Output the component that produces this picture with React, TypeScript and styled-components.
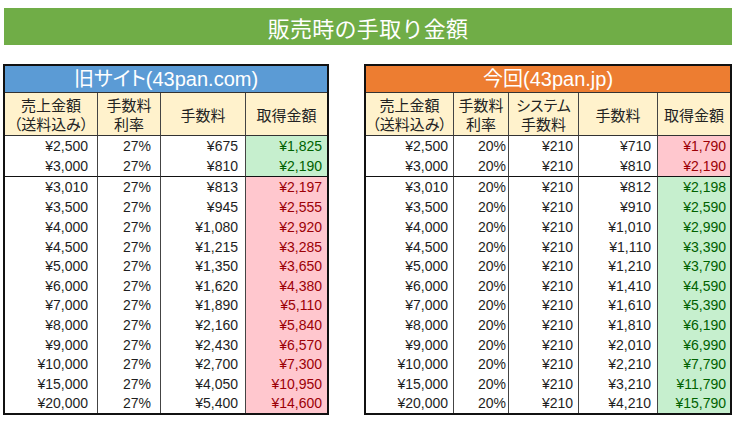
import React from 'react';
import styled, { createGlobalStyle } from 'styled-components';

const Global = createGlobalStyle`
  html, body { margin: 0; padding: 0; background: #fff; }
  body { font-family: "Liberation Sans", "Noto Sans CJK JP", sans-serif; }
`;

const Page = styled.div`
  width: 740px;
  height: 421px;
  box-sizing: border-box;
  padding: 8px 0 0 3px;
  display: flex;
  flex-direction: column;
  gap: 19px;
`;

const TitleBar = styled.div`
  margin-left: 1px;
  width: 728px;
  height: 37px;
  background: #70ad47;
  color: #fff;
  display: flex;
  align-items: center;
  justify-content: center;
  font-family: "Noto Sans CJK JP", sans-serif;
  font-size: 22px;
  letter-spacing: 0.3px;
`;

const Tables = styled.div`
  display: flex;
  gap: 35px;
  align-items: flex-start;
`;

const Table = styled.table<{ $w: number }>`
  width: ${(p) => p.$w}px;
  table-layout: fixed;
  border-collapse: separate;
  border-spacing: 0;
  border: 2px solid #111;
`;

const CaptionCell = styled.td<{ $bg: string }>`
  height: 26px;
  padding: 0;
  background: ${(p) => p.$bg};
  color: #fff;
  text-align: center;
  font-family: "Liberation Sans", "Noto Sans CJK JP", sans-serif;
  font-size: 20px;
  line-height: 26px;
  border-bottom: 1px solid #333;
  font-feature-settings: "palt";
`;

const HeadCell = styled.th<{ $first?: boolean }>`
  height: 42px;
  padding: 0;
  background: #fff2cc;
  color: #222;
  font-weight: normal;
  font-family: "Noto Sans CJK JP", sans-serif;
  font-size: 15px;
  line-height: 19px;
  text-align: center;
  border-left: ${(p) => (p.$first ? 'none' : '1px solid #444')};
  border-bottom: 1px solid #333;
  font-feature-settings: "palt";
  white-space: nowrap;
`;

const Cell = styled.td<{ $first?: boolean; $tone?: 'green' | 'red'; $sep?: boolean; $h: number; $pr: number }>`
  height: ${(p) => p.$h}px;
  padding: 0 ${(p) => p.$pr}px 0 0;
  text-align: right;
  font-family: "Liberation Sans", sans-serif;
  font-size: 14px;
  line-height: 1;
  color: ${(p) => (p.$tone === 'green' ? '#006100' : p.$tone === 'red' ? '#9c0006' : '#1e1e1e')};
  background: ${(p) => (p.$tone === 'green' ? '#c6efce' : p.$tone === 'red' ? '#ffc7ce' : '#fff')};
  border-left: ${(p) => (p.$first ? 'none' : '1px solid #444')};
  border-top: ${(p) => (p.$sep ? '1px solid #111' : 'none')};
  white-space: nowrap;
`;

type Row = { cells: string[]; tone: 'green' | 'red' };

const yen = (n: number) => '¥' + n.toLocaleString('en-US');

const oldRows: Row[] = [
  [2500, 675, 1825, 'green'],
  [3000, 810, 2190, 'green'],
  [3010, 813, 2197, 'red'],
  [3500, 945, 2555, 'red'],
  [4000, 1080, 2920, 'red'],
  [4500, 1215, 3285, 'red'],
  [5000, 1350, 3650, 'red'],
  [6000, 1620, 4380, 'red'],
  [7000, 1890, 5110, 'red'],
  [8000, 2160, 5840, 'red'],
  [9000, 2430, 6570, 'red'],
  [10000, 2700, 7300, 'red'],
  [15000, 4050, 10950, 'red'],
  [20000, 5400, 14600, 'red'],
].map(([a, f, t, tone]) => ({
  cells: [yen(a as number), '27%', yen(f as number), yen(t as number)],
  tone: tone as 'green' | 'red',
}));

const newRows: Row[] = [
  [2500, 710, 1790, 'red'],
  [3000, 810, 2190, 'red'],
  [3010, 812, 2198, 'green'],
  [3500, 910, 2590, 'green'],
  [4000, 1010, 2990, 'green'],
  [4500, 1110, 3390, 'green'],
  [5000, 1210, 3790, 'green'],
  [6000, 1410, 4590, 'green'],
  [7000, 1610, 5390, 'green'],
  [8000, 1810, 6190, 'green'],
  [9000, 2010, 6990, 'green'],
  [10000, 2210, 7790, 'green'],
  [15000, 3210, 11790, 'green'],
  [20000, 4210, 15790, 'green'],
].map(([a, f, t, tone]) => ({
  cells: [yen(a as number), '20%', '¥210', yen(f as number), yen(t as number)],
  tone: tone as 'green' | 'red',
}));

type Spec = {
  width: number;
  title: string;
  color: string;
  cols: number[];
  pads: number[];
  heads: React.ReactNode[];
  rows: Row[];
};

const FeeTable = ({ spec }: { spec: Spec }) => (
  <Table $w={spec.width}>
    <colgroup>
      {spec.cols.map((w, i) => (
        <col key={i} style={{ width: w }} />
      ))}
    </colgroup>
    <thead>
      <tr>
        <CaptionCell $bg={spec.color} colSpan={spec.cols.length}>
          {spec.title}
        </CaptionCell>
      </tr>
      <tr>
        {spec.heads.map((h, i) => (
          <HeadCell key={i} $first={i === 0}>
            {h}
          </HeadCell>
        ))}
      </tr>
    </thead>
    <tbody>
      {spec.rows.map((r, ri) => (
        <tr key={ri}>
          {r.cells.map((c, ci) => {
            const last = ci === r.cells.length - 1;
            return (
              <Cell
                key={ci}
                $first={ci === 0}
                $tone={last ? r.tone : undefined}
                $sep={ri === 2}
                $h={ri < 2 ? 20 : ri === 2 ? 20.6 : 19.6}
                $pr={spec.pads[ci]}
              >
                {c}
              </Cell>
            );
          })}
        </tr>
      ))}
    </tbody>
  </Table>
);

const Br = () => <br />;

const oldSpec: Spec = {
  width: 326,
  title: '旧サイト(43pan.com)',
  color: '#5b9bd5',
  cols: [92, 63, 85, 82],
  pads: [9, 9, 7, 5],
  heads: [
    <>売上金額<Br />（送料込み）</>,
    <>手数料<Br />利率</>,
    '手数料',
    '取得金額',
  ],
  rows: oldRows,
};

const newSpec: Spec = {
  width: 368,
  title: '今回(43pan.jp)',
  color: '#ed7d31',
  cols: [87, 55, 70, 79, 73],
  pads: [5, 2, 5, 6, 4],
  heads: [
    <>売上金額<Br />（送料込み）</>,
    <>手数料<Br />利率</>,
    <>システム<Br />手数料</>,
    '手数料',
    '取得金額',
  ],
  rows: newRows,
};

export default function App() {
  return (
    <>
      <Global />
      <Page>
        <TitleBar>販売時の手取り金額</TitleBar>
        <Tables>
          <FeeTable spec={oldSpec} />
          <FeeTable spec={newSpec} />
        </Tables>
      </Page>
    </>
  );
}
